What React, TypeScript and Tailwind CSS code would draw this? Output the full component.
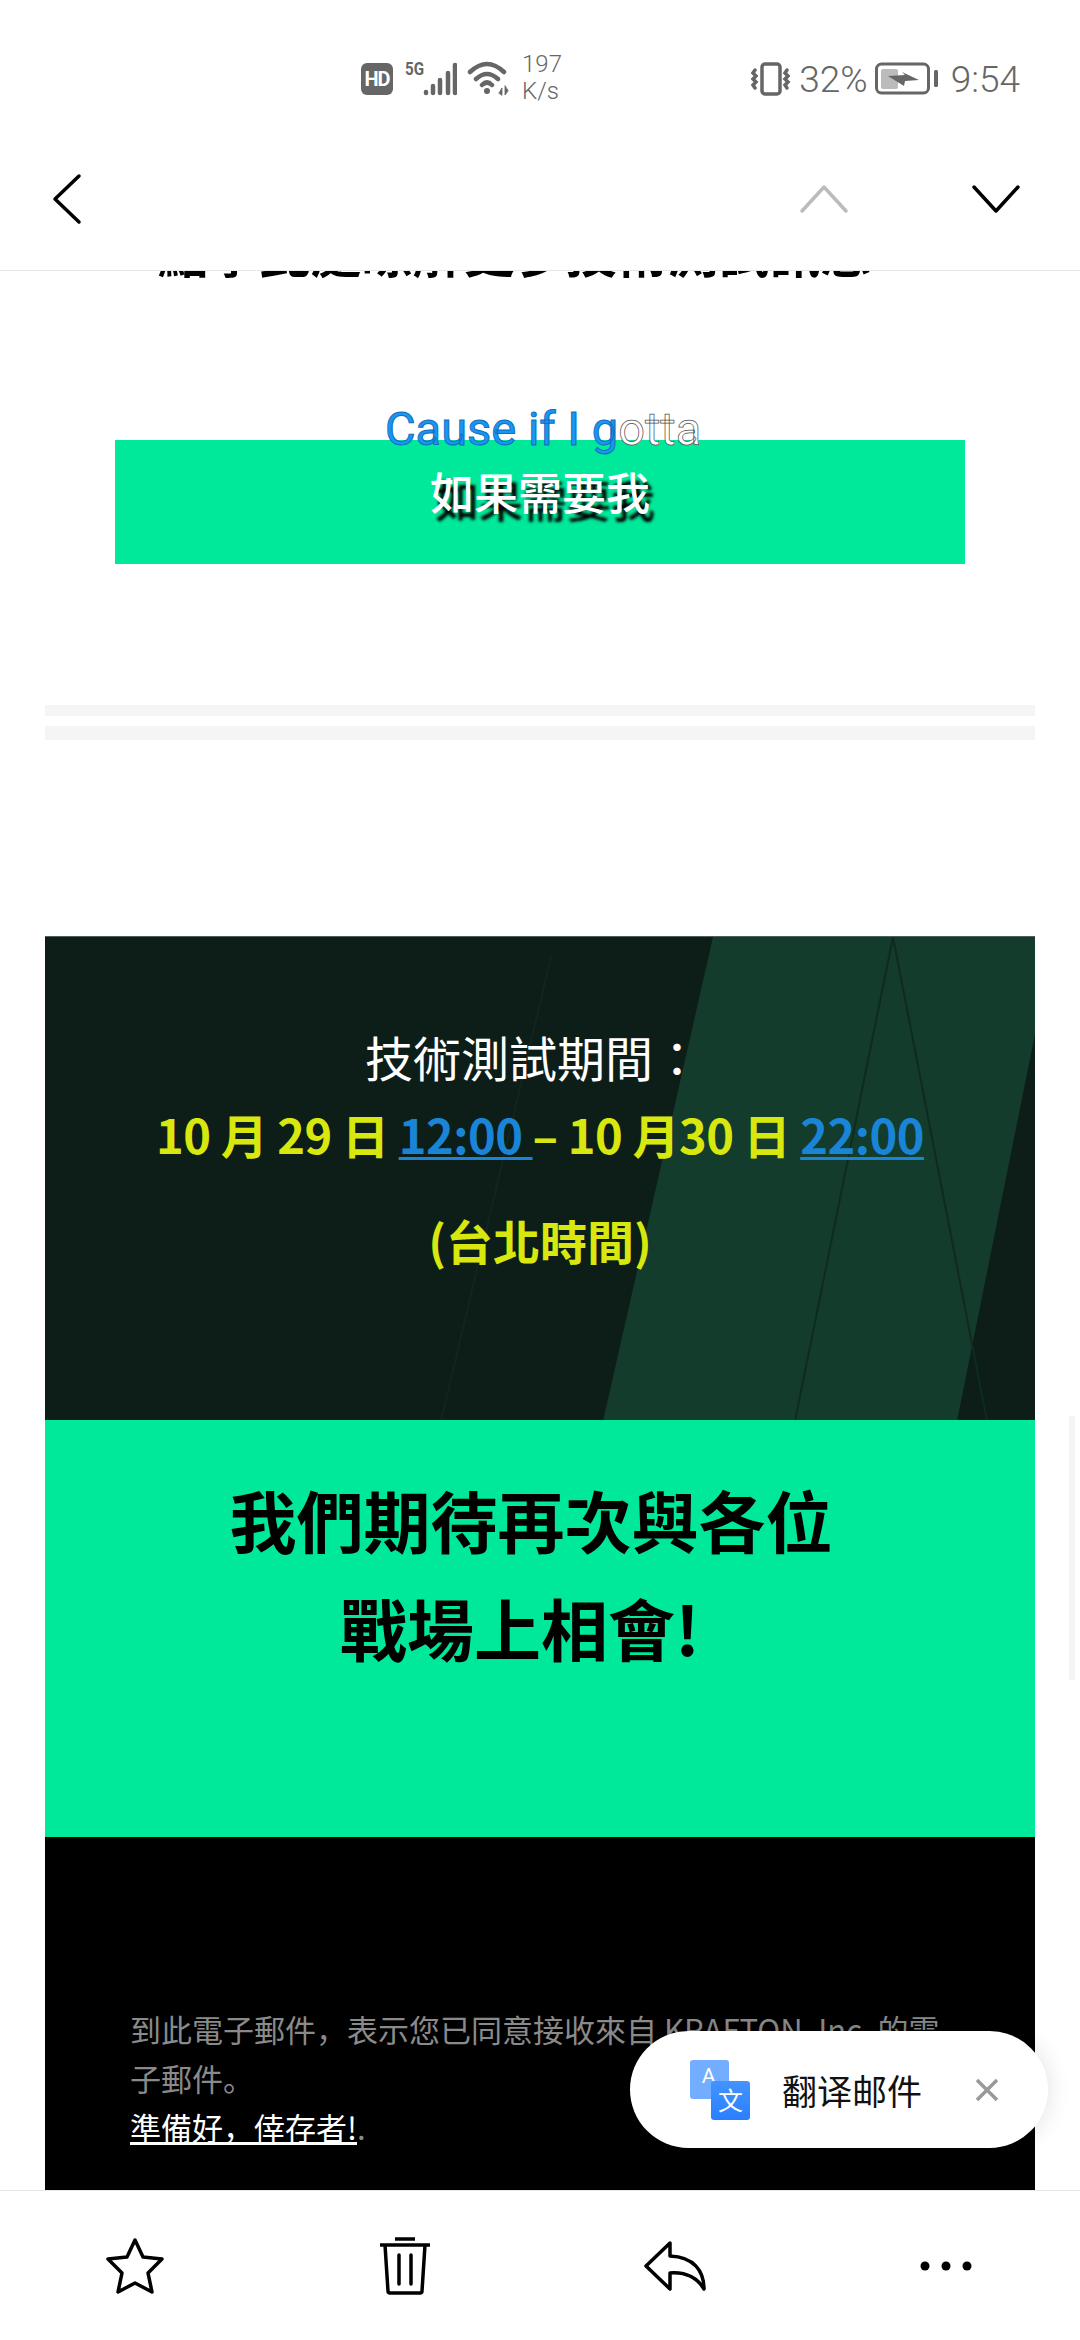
import React from 'react';

const cjk = "font-['Noto_Sans_CJK_TC',sans-serif]";

function StatusBar() {
  return (
    <div className="flex items-center h-[50px] mt-[54px] pl-[361px] pr-[60px] text-[#666] font-['Lato',sans-serif]">
      <span className="flex items-center justify-center w-[32px] h-[32px] rounded-[6px] bg-[#666] text-white text-[20px] font-bold font-['Roboto',sans-serif] tracking-[-1px]">
        HD
      </span>
      <div className="relative ml-[12px] w-[52px] h-[34px]">
        <span className="absolute left-0 top-[-5px] origin-left scale-x-[0.8] text-[19px] font-bold leading-[24px] font-['Roboto',sans-serif]">5G</span>
        <svg className="absolute left-0 top-0" width="52" height="34" viewBox="0 0 52 34" fill="none" stroke="#666" strokeWidth="4.5" strokeLinecap="round">
          <path d="M21 30v1M28 24v7M35 18v13M43 11v20M50 3v28" />
        </svg>
      </div>
      <svg className="ml-[10px]" width="42" height="36" viewBox="0 0 42 36" fill="none" stroke="#666" strokeWidth="4.5" strokeLinecap="round">
        <path d="M3 11Q20 -5 37 11M9 18Q20 8 31 18M15 24Q20 19 25 24" />
        <circle cx="20" cy="30" r="3" fill="#666" stroke="none" />
        <path d="M32 32l3-5v7zM38 25v9l3-4z" fill="#666" stroke="#666" strokeWidth="0.8" />
      </svg>
      <div className="ml-[13px] w-[40px] -translate-y-[1px] text-[24px] leading-[27px] font-light text-[#666] font-['Roboto',sans-serif]">
        <div>197</div>
        <div>K/s</div>
      </div>
      <div className="ml-auto flex items-center">
        <svg width="42" height="34" viewBox="0 0 42 34" fill="none" stroke="#666" strokeWidth="3.5" strokeLinecap="round">
          <rect x="11" y="2" width="18" height="30" rx="3" />
          <path d="M4 8l-2 3 3 3-3 3 3 3-3 3 2 3" />
          <path d="M36 8l-2 3 3 3-3 3 3 3-3 3 2 3" />
        </svg>
        <span className="ml-[6px] text-[37px] leading-none font-light font-['Roboto',sans-serif]">32%</span>
        <svg className="ml-[7px]" width="64" height="34" viewBox="0 0 64 34" fill="none">
          <rect x="1.5" y="2" width="52" height="29" rx="5" stroke="#666" strokeWidth="3" />
          <rect x="6" y="7" width="17" height="20" rx="2" fill="#bbb" />
          <path d="M13 14l17 -1 -3 -3 17 8 -14 1 -1 5z" fill="#666" />
          <rect x="59" y="8" width="4" height="17" rx="1.5" fill="#666" />
        </svg>
        <span className="ml-[12px] text-[37px] leading-none font-light font-['Roboto',sans-serif]">9:54</span>
      </div>
    </div>
  );
}

function TopBar() {
  return (
    <div className="flex items-center h-[166px] pt-[23px] pl-[52px] pr-[58px]">
      <svg width="30" height="52" viewBox="0 0 30 52" fill="none" stroke="#000" strokeWidth="3.5" strokeLinecap="round" strokeLinejoin="round">
        <path d="M27 3L3 26l24 23" />
      </svg>
      <svg className="ml-auto" width="52" height="30" viewBox="0 0 52 30" fill="none" stroke="#bbb" strokeWidth="3.5" strokeLinecap="round" strokeLinejoin="round">
        <path d="M4 27L26 3l22 24" />
      </svg>
      <svg className="ml-[120px]" width="52" height="30" viewBox="0 0 52 30" fill="none" stroke="#000" strokeWidth="3.5" strokeLinecap="round" strokeLinejoin="round">
        <path d="M4 3l22 24L48 3" />
      </svg>
    </div>
  );
}

function Period() {
  return (
    <div className={`relative h-[484px] mt-[196px] bg-[#0d1e19] border-t border-[#4f5f59] overflow-hidden ${cjk}`}>
      <svg className="absolute inset-0" width="990" height="484" viewBox="0 0 990 484" fill="none">
        <path d="M668 0H990V97L912 484H558Z" fill="#143c2d" />
        <path d="M848 0L750 484" stroke="#0f2a22" strokeWidth="2" />
        <path d="M848 0L942 484" stroke="#0f2a22" strokeWidth="2" />
        <path d="M506 20L396 484" stroke="#13241f" strokeWidth="2" />
      </svg>
      <div className="relative flex flex-col items-center pt-[84px]">
        <p className="text-[48px] leading-[70px] text-white pr-[14px]">技術測試期間：</p>
        <p className="mt-[8px] text-[47px] leading-[70px] font-bold tracking-[-0.5px] text-[#d8e80f] whitespace-nowrap">
          10 月 29 日 <span className="text-[#1a85d6] underline decoration-[3px] underline-offset-[3px]">12:00 </span>– 10 月30 日 <span className="text-[#1a85d6] underline decoration-[3px] underline-offset-[3px]">22:00</span>
        </p>
        <p className="mt-[36px] text-[47px] leading-[70px] font-bold text-[#d8e80f]">(台北時間)</p>
      </div>
    </div>
  );
}

function Translate() {
  return (
    <div className="absolute left-[630px] top-[2031px] flex items-center w-[418px] h-[117px] rounded-full bg-white shadow-[0_0_24px_rgba(0,0,0,0.12)]">
      <div className="relative ml-[60px] w-[60px] h-[60px] shrink-0">
        <div className="absolute left-0 top-0 flex items-center justify-center w-[39px] h-[39px] rounded-[3px] bg-[#73adff] pr-[2px] pb-[4px] text-white text-[21px] font-['Roboto',sans-serif]">A</div>
        <div className={`absolute left-[21px] top-[21px] flex items-center justify-center w-[39px] h-[39px] rounded-[3px] bg-gradient-to-b from-[#4393ff] to-[#2a7fff] text-white text-[25px] ${cjk}`}>文</div>
      </div>
      <span className="ml-[32px] text-[35px] leading-none text-[#111] font-['Noto_Sans_CJK_SC',sans-serif]">翻译邮件</span>
      <svg className="ml-[53px]" width="24" height="24" viewBox="0 0 24 24" fill="none" stroke="#999" strokeWidth="3.5">
        <path d="M2 2l20 20M22 2L2 22" />
      </svg>
    </div>
  );
}

export default function App() {
  return (
    <div className="relative flex flex-col w-[1080px] h-[2340px] overflow-hidden bg-white">
      <header className="h-[270px] shrink-0 bg-white">
        <StatusBar />
        <TopBar />
      </header>
      <div className="h-px shrink-0 bg-[#e6e6e6]" />

      <main className="flex-1 overflow-hidden px-[45px]">
        <p className={`-mt-[54px] h-[68px] text-center text-[51px] leading-[68px] font-bold text-black whitespace-nowrap ${cjk}`}>
          點擊此處瞭解更多技術測試訊息。
        </p>

        <div className="relative mx-[70px] mt-[155px] h-[124px] flex justify-center bg-[#00e99b]">
          <span className="absolute left-[270px] -top-[36px] text-[47px] leading-[50px] font-normal font-['Roboto',sans-serif] whitespace-nowrap">
            <span className="text-[#1a96f0] [-webkit-text-stroke:1px_#0f6fc0]">Cause if I g</span>
            <span className="text-white [-webkit-text-stroke:0.75px_#555]">otta</span>
          </span>
          <span className={`mt-[18px] text-[44px] leading-[66px] font-medium text-white [text-shadow:5px_8px_3px_#000] ${cjk}`}>
            如果需要我
          </span>
        </div>

        <div className="mt-[141px] h-[11px] bg-[#f5f5f5]" />
        <div className="mt-[10px] h-[14px] bg-[#f5f5f5]" />

        <Period />

        <section className={`h-[417px] bg-[#00e99b] pt-[45px] text-center text-[67px] leading-[108px] font-bold text-black ${cjk}`}>
          <p className="pr-[18px]">我們期待再次與各位</p>
          <p className="pr-[40px]">戰場上相會!</p>
        </section>

        <section className="h-[360px] bg-black pt-[167px] pl-[85px] pr-[85px] text-[31px] leading-[49px] text-[#8a8a8a] font-['Noto_Sans_CJK_SC',sans-serif]">
          <p>
            到此電子郵件，表示您已同意接收來自 KRAFTON, Inc. 的電子郵件。
            <br />
            <span className="text-white underline decoration-[3px]">準備好，倖存者!</span>.
          </p>
        </section>
      </main>

      <footer className="grid grid-cols-4 items-center justify-items-center h-[150px] shrink-0 bg-white border-t border-[#e6e6e6]">
        <svg width="58" height="56" viewBox="0 0 58 56" fill="none" stroke="#000" strokeWidth="3.5" strokeLinejoin="round">
          <path d="M29 2l8 17 19 2-14 14 4 19-17-9-17 9 4-19L2 21l19-2z" />
        </svg>
        <svg width="52" height="58" viewBox="0 0 52 58" fill="none" stroke="#000" strokeWidth="3.5" strokeLinecap="butt">
          <path d="M16 2h20" />
          <path d="M1 8h50" />
          <path d="M6 8l3 46a2 2 0 0 0 2 2h30a2 2 0 0 0 2-2l3-46" />
          <path d="M20 18v29M32 18v29" strokeLinecap="round" />
        </svg>
        <svg width="64" height="52" viewBox="0 0 64 52" fill="none" stroke="#000" strokeWidth="3.5" strokeLinejoin="round">
          <path d="M27 3L3 26l24 23V33c14-1 26 3 34 16 0-18-10-32-34-33z" />
        </svg>
        <svg className="translate-x-[1px]" width="54" height="12" viewBox="0 0 54 12" fill="#000">
          <circle cx="6" cy="6" r="4.5" />
          <circle cx="27" cy="6" r="4.5" />
          <circle cx="48" cy="6" r="4.5" />
        </svg>
      </footer>

      <Translate />
      <div className="absolute left-[1069px] top-[1416px] w-[6px] h-[264px] bg-[#f4f4f4]" />
    </div>
  );
}
